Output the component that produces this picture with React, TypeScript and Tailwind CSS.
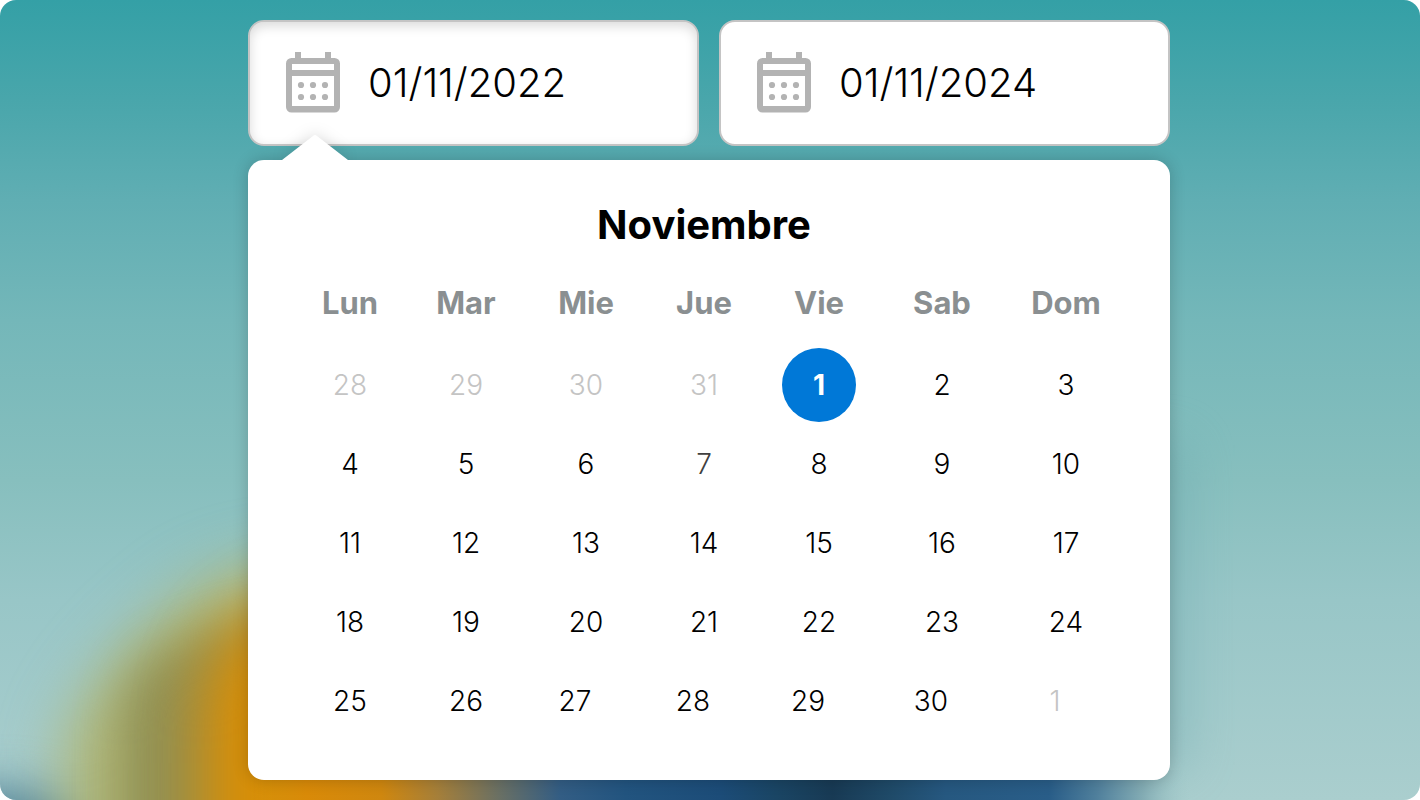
import React, { useState } from "react";
import { clsx } from "clsx";

interface DateFieldProps {
  id: string;
  label: string;
  value: string;
  active?: boolean;
  onChange: (value: string) => void;
}

interface Day {
  day: number;
  outside?: boolean;
  muted?: boolean;
}

// Column widths of the calendar, one per weekday
const columns = [
  { name: "Lun", width: "w-[116px]" },
  { name: "Mar", width: "w-[116px]" },
  { name: "Mie", width: "w-[124px]" },
  { name: "Jue", width: "w-[112px]" },
  { name: "Vie", width: "w-[118px]" },
  { name: "Sab", width: "w-[128px]" },
  { name: "Dom", width: "w-[120px]" },
];

const days: Day[] = [
  ...[28, 29, 30, 31].map((day) => ({ day, outside: true })),
  ...Array.from({ length: 30 }, (_, i) => ({ day: i + 1, muted: i + 1 === 7 })),
  { day: 1, outside: true },
];

const weeks = [0, 1, 2, 3, 4].map((w) => days.slice(w * 7, w * 7 + 7));

const CalendarIcon = () => (
  <svg
    viewBox="0 0 54 62"
    className="h-[62px] w-[54px] shrink-0"
    fill="#b3b3b3"
    aria-hidden="true"
  >
    <path
      fillRule="evenodd"
      d="M9 0h6v6h24V0h6v6h3.500a5.500 5.500 0 0 1 5.500 5.500v43.500a5.500 5.500 0 0 1-5.500 5.500h-43A5.500 5.500 0 0 1 0 55V11.500A5.500 5.500 0 0 1 5.500 6H9zM6 12v6h42v-6zM6 24v30h42V24z"
    />
    <circle cx="15" cy="33" r="3.100" />
    <circle cx="27" cy="33" r="3.100" />
    <circle cx="39" cy="33" r="3.100" />
    <circle cx="15" cy="45" r="3.100" />
    <circle cx="27" cy="45" r="3.100" />
    <circle cx="39" cy="45" r="3.100" />
  </svg>
);

const DateField: React.FC<DateFieldProps> = ({
  id,
  label,
  value,
  active,
  onChange,
}) => (
  <div
    className={clsx(
      "flex h-[126px] min-w-0 items-center gap-7 rounded-2xl border-2 border-[#c4c4c4] bg-white px-9",
      active && "shadow-[inset_0_4px_12px_rgba(0,0,0,0.15)]"
    )}
  >
    <label htmlFor={id} aria-label={label}>
      <CalendarIcon />
    </label>
    <input
      id={id}
      type="text"
      value={value}
      onChange={(e) => onChange(e.target.value)}
      className="w-full min-w-0 bg-transparent text-[40px] font-light text-black outline-none"
    />
  </div>
);

// Blurred landscape behind the picker
const Backdrop = () => (
  <svg
    viewBox="0 0 1420 800"
    preserveAspectRatio="none"
    className="absolute inset-0 h-full w-full"
    aria-hidden="true"
  >
    <defs>
      <linearGradient id="sky" x1="0" y1="0" x2="0" y2="1">
        <stop offset="0" stopColor="#34a0a6" />
        <stop offset="0.125" stopColor="#49a6ab" />
        <stop offset="0.250" stopColor="#60aeb3" />
        <stop offset="0.400" stopColor="#74b7b9" />
        <stop offset="0.600" stopColor="#87bfbe" />
        <stop offset="0.750" stopColor="#98c6c7" />
        <stop offset="1" stopColor="#aacece" />
      </linearGradient>
      <linearGradient id="ground" gradientUnits="userSpaceOnUse" x1="250" y1="0" x2="1190" y2="0">
        <stop offset="0" stopColor="#d09010" stopOpacity="0" />
        <stop offset="0.060" stopColor="#d98a08" />
        <stop offset="0.140" stopColor="#cf870f" />
        <stop offset="0.200" stopColor="#a57f3a" />
        <stop offset="0.265" stopColor="#6a7064" />
        <stop offset="0.330" stopColor="#335d84" />
        <stop offset="0.400" stopColor="#22547f" />
        <stop offset="0.500" stopColor="#1c4c78" />
        <stop offset="0.560" stopColor="#1a4564" />
        <stop offset="0.620" stopColor="#183a54" />
        <stop offset="0.680" stopColor="#1f4a68" />
        <stop offset="0.740" stopColor="#265880" />
        <stop offset="0.850" stopColor="#295d88" />
        <stop offset="0.900" stopColor="#4f7f9c" />
        <stop offset="0.950" stopColor="#83acb4" />
        <stop offset="1" stopColor="#a0c8c8" stopOpacity="0" />
      </linearGradient>
      <filter id="blurWide" x="-50%" y="-50%" width="200%" height="200%" colorInterpolationFilters="sRGB">
        <feGaussianBlur stdDeviation="30" />
      </filter>
      <filter id="blurSoft" x="-50%" y="-50%" width="200%" height="200%" colorInterpolationFilters="sRGB">
        <feGaussianBlur stdDeviation="24" />
      </filter>
    </defs>
    <rect width="1420" height="800" fill="url(#sky)" />
    <ellipse cx="0" cy="850" rx="110" ry="60" fill="#4d7f95" filter="url(#blurSoft)" />
    <path d="M64 940V745C80 690 140 630 195 590C235 568 280 560 360 560V940z" fill="#b0b674" filter="url(#blurWide)" />
    <path d="M122 940V720C126 670 150 635 300 615V940z" fill="#85834a" opacity="0.75" filter="url(#blurSoft)" />
    <path d="M200 940V710C204 670 222 618 300 592H460V940z" fill="#d88e06" filter="url(#blurWide)" />
    <rect x="1100" y="440" width="90" height="330" fill="#5f9fa6" opacity="0.3" filter="url(#blurSoft)" />
    <rect x="250" y="770" width="940" height="30" fill="url(#ground)" />
  </svg>
);

const Calendar = () => {
  const [selected, setSelected] = useState(4);

  return (
    <section className="relative mt-3.5 rounded-2xl bg-white px-11 pt-10 pb-10 shadow-[0_0_16px_rgba(0,0,0,0.2)]">
      {/* Pointer to the active field */}
      <svg
        viewBox="0 0 66 25"
        className="absolute bottom-full left-[34px] h-[25px] w-[66px] overflow-visible drop-shadow-[0_0_8px_rgba(0,0,0,0.15)] [clip-path:inset(-20px_-20px_0_-20px)]"
        aria-hidden="true"
      >
        <path d="M0 25L31 1Q33 -1 35 1L66 25z" fill="#fff" />
      </svg>

      <h2 className="pr-2.5 text-center text-[40px] leading-[50px] font-bold">
        Noviembre
      </h2>

      <table className="mt-[29px] w-full table-fixed">
        <thead>
          <tr>
            {columns.map((col) => (
              <th
                key={col.name}
                scope="col"
                className={clsx(
                  "h-[66px] p-0 pb-[18px] text-center align-middle text-[31px] leading-12 font-bold text-[#8a8f91]",
                  col.width
                )}
              >
                {col.name}
              </th>
            ))}
          </tr>
        </thead>
        <tbody>
          {weeks.map((week, w) => (
            <tr key={w}>
              {week.map(({ day, outside, muted }, d) => {
                const index = w * 7 + d;
                return (
                  <td
                    key={index}
                    className={clsx(
                      "h-[79px] p-0 text-center",
                      w === 4 && d > 1 && "pr-[22px]"
                    )}
                  >
                    <button
                      type="button"
                      onClick={() => setSelected(index)}
                      className={clsx(
                        "inline-flex size-[74px] items-center justify-center rounded-full align-middle text-[28px]",
                        selected === index
                          ? "bg-[#0078d7] font-bold text-white"
                          : "font-light",
                        selected !== index &&
                          (outside
                            ? "text-[#c4c4c4]"
                            : muted
                              ? "text-[#404040]"
                              : "text-black")
                      )}
                    >
                      {day}
                    </button>
                  </td>
                );
              })}
            </tr>
          ))}
        </tbody>
      </table>
    </section>
  );
};

const App: React.FC = () => {
  const [from, setFrom] = useState("01/11/2022");
  const [to, setTo] = useState("01/11/2024");

  return (
    <main className="relative min-h-screen overflow-hidden rounded-2xl py-5 pr-0.5 font-['Inter',sans-serif] text-black">
      <Backdrop />
      <div className="relative mx-auto w-full max-w-[922px]">
        <div className="grid grid-cols-2 gap-5">
          <DateField id="from" label="Desde" value={from} onChange={setFrom} active />
          <DateField id="to" label="Hasta" value={to} onChange={setTo} />
        </div>
        <Calendar />
      </div>
    </main>
  );
};

export default App;
